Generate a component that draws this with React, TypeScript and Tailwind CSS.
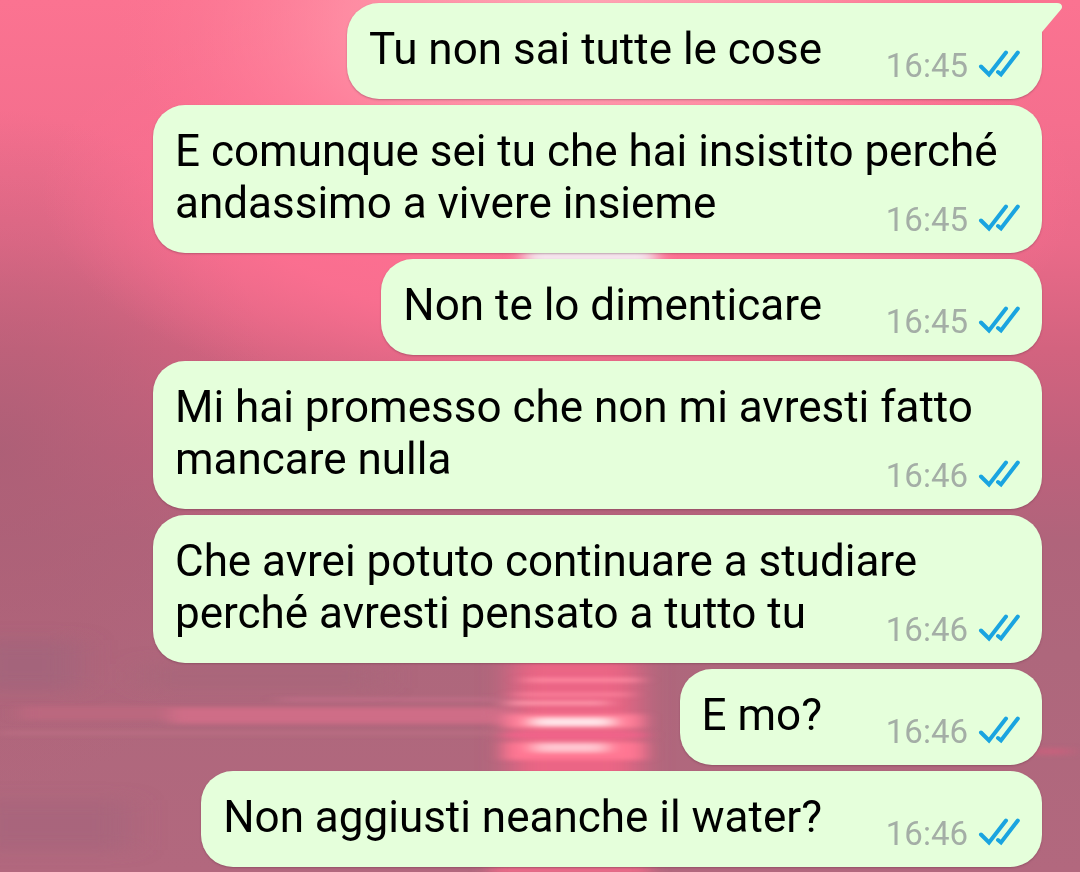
interface Message {
  id: number;
  text: string;
  time: string;
}

const messages: Message[] = [
  { id: 1, text: 'Tu non sai tutte le cose', time: '16:45' },
  { id: 2, text: 'E comunque sei tu che hai insistito perché andassimo a vivere insieme', time: '16:45' },
  { id: 3, text: 'Non te lo dimenticare', time: '16:45' },
  { id: 4, text: 'Mi hai promesso che non mi avresti fatto mancare nulla', time: '16:46' },
  { id: 5, text: 'Che avrei potuto continuare a studiare perché avresti pensato a tutto tu', time: '16:46' },
  { id: 6, text: 'E mo?', time: '16:46' },
  { id: 7, text: 'Non aggiusti neanche il water?', time: '16:46' }
];

function ReadTicks() {
  return (
    <svg
      width="42"
      height="28"
      viewBox="0 0 42 28"
      fill="none"
      stroke="#1aa4e0"
      strokeWidth="4"
      strokeLinejoin="miter"
      role="img"
      aria-label="Letto"
    >
      <path d="M3 16.5 L11 24.5 L28 2.500" strokeLinecap="round" />
      <path d="M20 22 L23 24.5 L39.800 2.500" strokeLinecap="round" />
    </svg>
  );
}

// Sunset over the sea, stretched to cover the whole chat
function Wallpaper() {
  return (
    <svg
      className="absolute inset-0 h-full w-full"
      viewBox="0 0 1080 872"
      preserveAspectRatio="none"
      aria-hidden="true"
    >
      <defs>
        <linearGradient id="sky" x1="0" y1="0" x2="0" y2="1">
          <stop offset="0" stopColor="#fb7391" />
          <stop offset="0.14" stopColor="#f56f8e" />
          <stop offset="0.28" stopColor="#ea6a89" />
          <stop offset="0.4" stopColor="#d3637f" />
          <stop offset="0.52" stopColor="#be617c" />
          <stop offset="0.62" stopColor="#b0647b" />
          <stop offset="0.75" stopColor="#ae677c" />
          <stop offset="1" stopColor="#b2687e" />
        </linearGradient>
        <radialGradient id="glow">
          <stop offset="0" stopColor="#ffa8b6" />
          <stop offset="0.5" stopColor="#ff94a8" stopOpacity="0.75" />
          <stop offset="1" stopColor="#ff7592" stopOpacity="0" />
        </radialGradient>
        <radialGradient id="warm">
          <stop offset="0" stopColor="#ff7092" />
          <stop offset="0.6" stopColor="#ff7092" stopOpacity="0.8" />
          <stop offset="1" stopColor="#ff7092" stopOpacity="0" />
        </radialGradient>
        <radialGradient id="dusk">
          <stop offset="0" stopColor="#a85f75" stopOpacity="0.75" />
          <stop offset="0.5" stopColor="#ae5f76" stopOpacity="0.4" />
          <stop offset="1" stopColor="#b85f79" stopOpacity="0" />
        </radialGradient>
        <filter id="soft" x="-20%" y="-100%" width="140%" height="300%">
          <feGaussianBlur stdDeviation="9 2" />
        </filter>
        <filter id="wide" x="-20%" y="-50%" width="140%" height="200%">
          <feGaussianBlur stdDeviation="16 8" />
        </filter>
      </defs>
      <rect width="1080" height="872" fill="url(#sky)" />
      <ellipse cx="0" cy="450" rx="280" ry="340" fill="url(#dusk)" />
      <ellipse cx="560" cy="190" rx="520" ry="230" fill="url(#warm)" />
      <ellipse cx="580" cy="20" rx="470" ry="250" fill="url(#glow)" />
      <rect x="524" y="246" width="132" height="20" fill="#f5e4ec" filter="url(#soft)" />
      <g filter="url(#wide)">
        <rect x="-30" y="640" width="110" height="50" fill="#9f657c" opacity="0.7" />
        <rect x="140" y="664" width="240" height="24" fill="#a6667b" opacity="0.7" />
        <rect x="-30" y="800" width="160" height="50" fill="#a5657c" opacity="0.7" />
        <rect x="512" y="655" width="126" height="170" fill="#f26586" opacity="0.9" />
      </g>
      <g filter="url(#soft)">
        <rect x="20" y="706" width="480" height="14" fill="#bb687f" />
        <rect x="170" y="708" width="350" height="16" fill="#d66f89" opacity="0.75" />
        <rect x="280" y="698" width="220" height="3" fill="#c4708a" />
        <rect x="0" y="731" width="500" height="4" fill="#ba6d82" />
        <rect x="1030" y="748" width="40" height="7" fill="#c5627d" />
        <rect x="525" y="678" width="115" height="4" fill="#ff8ba3" />
        <rect x="515" y="693" width="115" height="3" fill="#ff87a0" />
        <rect x="508" y="701" width="100" height="4" fill="#ff9bae" />
        <rect x="506" y="714" width="135" height="14" fill="#ff7f99" />
        <rect x="532" y="718" width="80" height="8" fill="#ffe6ea" />
        <rect x="504" y="732" width="140" height="6" fill="#f0648a" />
        <rect x="505" y="742" width="138" height="18" fill="#ff7793" />
        <rect x="534" y="743" width="72" height="9" fill="#ffc6d0" />
        <rect x="490" y="866" width="160" height="8" fill="#ea6a88" />
      </g>
    </svg>
  );
}

function BubbleTail() {
  return (
    <svg className="absolute top-0 left-full -ml-8" width="53" height="32" viewBox="0 0 53 32" aria-hidden="true">
      <path d="M0 0 H47 C52 0 53.500 4 50.500 7 L32 29 V32 H0 Z" fill="#e5ffdb" />
    </svg>
  );
}

function Bubble({ message, hasTail }: { message: Message; hasTail: boolean }) {
  return (
    <li className="relative grid max-w-full rounded-[32px] bg-[#e5ffdb] px-[22px] pt-5 pb-[17px] shadow-[0_1px_2px_rgba(90,40,60,0.35)]">
      {hasTail && <BubbleTail />}
      <p className="relative col-start-1 row-start-1 pb-[7px] text-[44px] leading-[52px] text-black">
        {message.text}
        {/* keeps the last line clear of the time */}
        <span className="inline-block w-[198px]" />
      </p>
      <div className="relative col-start-1 row-start-1 flex items-start gap-[10px] self-end justify-self-end">
        <time className="text-[33px] leading-8 text-[#a4aea6]">{message.time}</time>
        <ReadTicks />
      </div>
    </li>
  );
}

export default function App() {
  return (
    <main className="relative min-h-screen overflow-hidden bg-[#b2677d] font-[Roboto,sans-serif]">
      <Wallpaper />
      <ul className="relative flex flex-col items-end gap-[6px] pt-[3px] pr-[38px] pb-1 pl-[153px]">
        {messages.map((message, index) => (
          <Bubble key={message.id} message={message} hasTail={index === 0} />
        ))}
      </ul>
    </main>
  );
}
